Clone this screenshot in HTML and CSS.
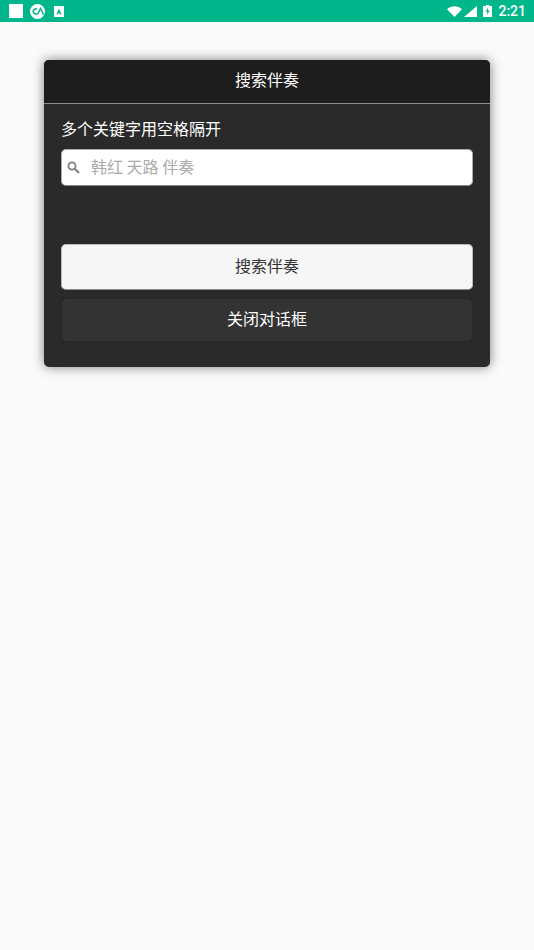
FILE: index.html
```html
<!DOCTYPE html>
<html lang="zh">
<head>
    <meta charset="UTF-8">
    <meta name="viewport" content="width=device-width, initial-scale=1.0">
    <title>搜索伴奏</title>
    <link rel="stylesheet" href="styles.css">
</head>
<body>
    <!-- 状态栏 -->
    <div class="statusbar">
        <div class="status-left">
            <span class="notif-square"></span>
            <span class="notif-round">
                <svg width="14" height="9" viewBox="0 0 14 9"><path d="M6 2.2A2.6 2.6 0 1 0 6 6.8M6.5 7.5L9.5 1.5L12.5 7.5" fill="none" stroke="#00b68a" stroke-width="1.5"/></svg>
            </span>
            <span class="notif-app">
                <svg width="10" height="11" viewBox="0 0 10 11"><path d="M0 0H10V11H0Z" fill="#fff"/><path d="M2.4 8.6L5 2.4L7.6 8.6H6.3L5.9 7.4H4.1L3.7 8.6Z" fill="#00b68a"/></svg>
            </span>
        </div>
        <div class="status-right">
            <svg class="icon-wifi" width="15" height="11" viewBox="0 0 15 11"><path d="M0 3.2C4.1 -0.8 10.9 -0.8 15 3.2L7.5 11Z" fill="#fff"/></svg>
            <svg class="icon-signal" width="13" height="11" viewBox="0 0 13 11"><path d="M13 0V11H0Z" fill="#fff"/></svg>
            <svg class="icon-battery" width="9" height="12" viewBox="0 0 9 12"><path d="M2.8 0H6.2V1H9V12H0V1H2.8Z" fill="#fff"/><path d="M5.1 2.6L2.6 6.8H4.2V10L6.6 5.6H5Z" fill="#00b68a"/></svg>
            <span class="clock">2:21</span>
        </div>
    </div>

    <!-- 搜索对话框 -->
    <div class="dialog">
        <div class="dialog-title">搜索伴奏</div>
        <div class="dialog-body">
            <div class="hint">多个关键字用空格隔开</div>
            <div class="search-box">
                <svg class="search-icon" width="13" height="13" viewBox="0 0 13 13"><circle cx="5" cy="5" r="3.6" fill="none" stroke="#808080" stroke-width="1.8"/><path d="M7.8 7.8L12 12" stroke="#808080" stroke-width="2"/></svg>
                <input class="search-input" type="text" placeholder="韩红 天路 伴奏">
            </div>
            <button class="btn btn-light">搜索伴奏</button>
            <button class="btn btn-dark">关闭对话框</button>
        </div>
    </div>
</body>
</html>
```

FILE: styles.css
```css
body {
    margin: 0;
    height: 950px;
    overflow: hidden;
    background-color: #fafafa;
    font-family: "Noto Sans CJK SC", "Noto Sans", sans-serif;
}
.statusbar {
    height: 22px;
    background-color: #00b68a;
    display: flex;
    justify-content: space-between;
    align-items: center;
    padding: 0 8px 0 9px;
}
.status-left, .status-right {
    display: flex;
    align-items: center;
}
.notif-square {
    width: 14px;
    height: 14px;
    background-color: #fff;
}
.notif-round {
    width: 15px;
    height: 15px;
    margin-left: 7px;
    border-radius: 50%;
    background-color: #fff;
    display: flex;
    align-items: center;
    justify-content: center;
}
.notif-app {
    display: flex;
    margin-left: 9px;
}
.icon-signal {
    margin-left: 2px;
}
.icon-battery {
    margin-left: 6px;
}
.clock {
    margin-left: 6px;
    color: #fff;
    font-family: Roboto, sans-serif;
    font-size: 14px;
    font-weight: 500;
}
.dialog {
    width: 446px;
    margin: 38px 0 0 44px;
    background-color: #2a2a2a;
    border-radius: 5px;
    box-shadow: 0 0 12px rgba(0,0,0,0.5);
    overflow: hidden;
}
.dialog-title {
    height: 43px;
    line-height: 39px;
    text-align: center;
    color: #fff;
    font-size: 16px;
    background-color: #1d1d1d;
    border-bottom: 1px solid #8c8c8c;
}
.dialog-body {
    padding: 16px 17px 25px;
    display: flex;
    flex-direction: column;
}
.hint {
    height: 21px;
    line-height: 16px;
    color: #fff;
    font-size: 16px;
}
.search-box {
    height: 37px;
    margin-top: 8px;
    box-sizing: border-box;
    display: flex;
    align-items: center;
    padding-left: 5px;
    background-color: #fff;
    border: 1px solid #aaa;
    border-bottom-color: #8a8a8a;
    border-radius: 5px;
}
.search-icon {
    flex: none;
}
.search-input {
    flex: 1;
    min-width: 0;
    margin-left: 11px;
    padding: 0 0 4px;
    border: none;
    outline: none;
    background: transparent;
    font-family: inherit;
    font-size: 16px;
    color: #333;
}
.search-input::placeholder {
    color: #aaa;
    opacity: 1;
}
.btn {
    box-sizing: border-box;
    font-family: inherit;
    font-size: 16px;
    border-radius: 5px;
    padding: 0 0 4px;
}
.btn-light {
    height: 46px;
    margin-top: 58px;
    color: #333;
    background-color: #f6f6f6;
    border: 1px solid #bbb;
    border-bottom-color: #8a8a8a;
}
.btn-dark {
    height: 44px;
    margin-top: 8px;
    color: #fff;
    background-color: #333;
    border: 1px solid #292929;
    box-shadow: 0 0 1px rgba(0,0,0,0.4);
}
```
